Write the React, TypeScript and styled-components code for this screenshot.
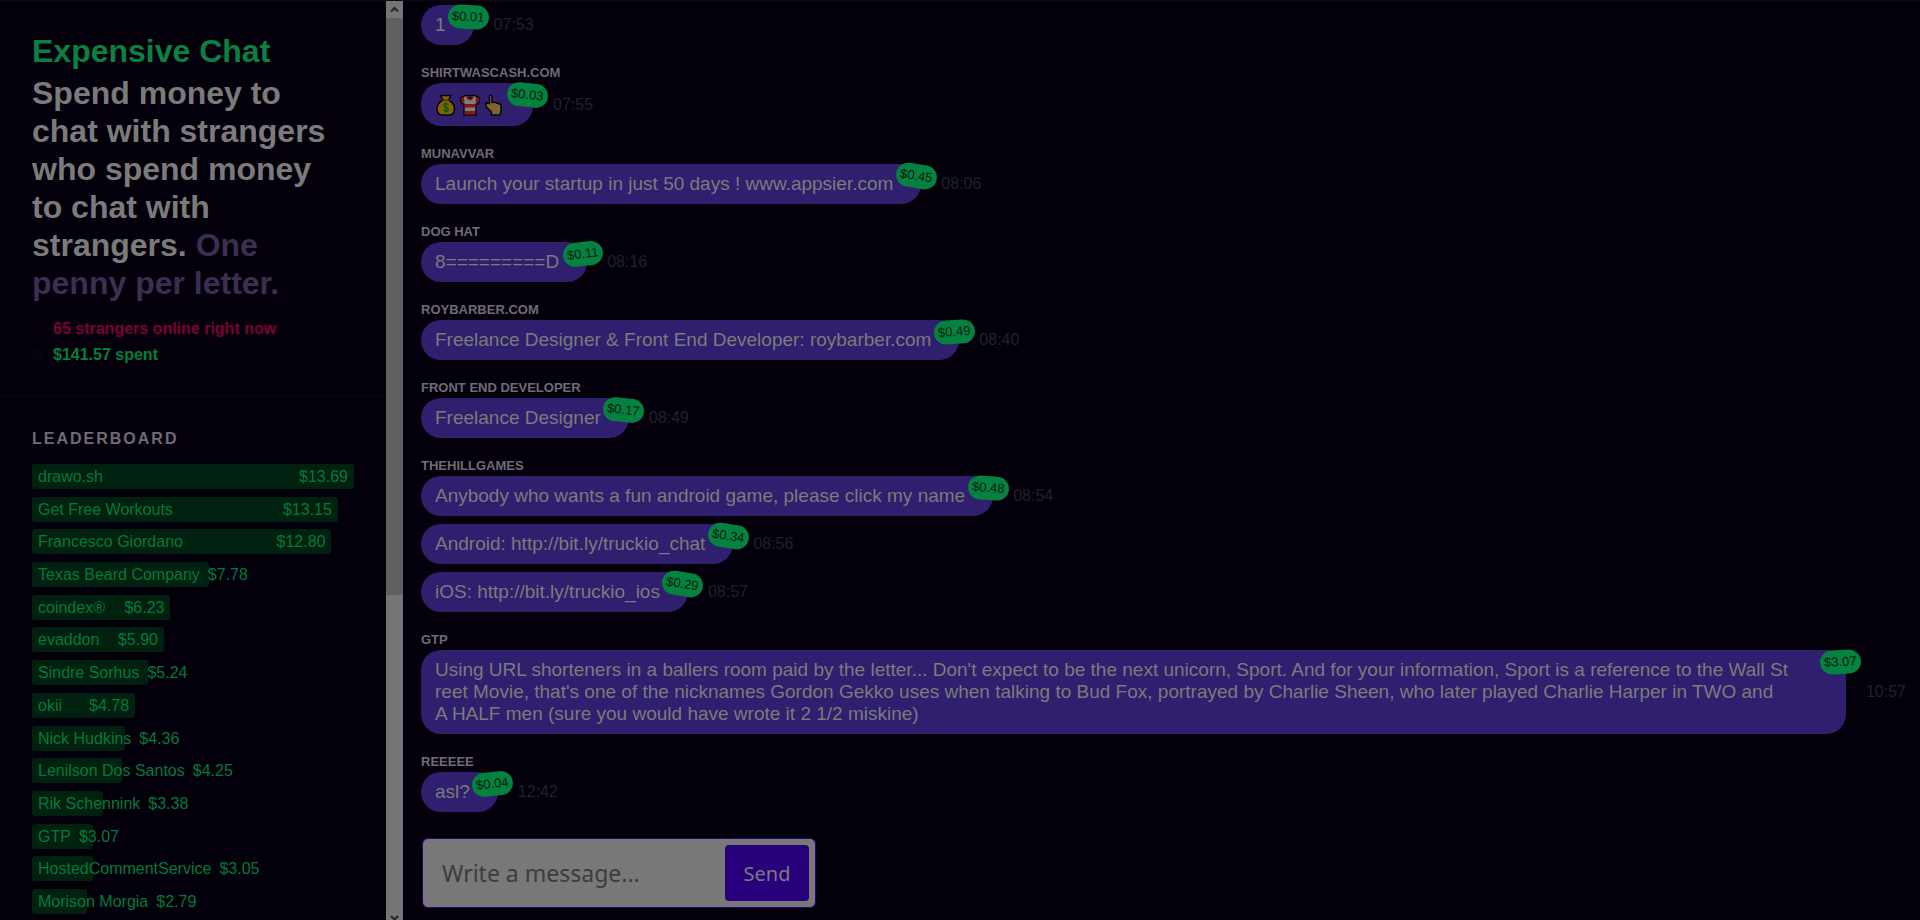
import React from "react";
import styled, { createGlobalStyle } from "styled-components";

const GlobalStyle = createGlobalStyle`
  *, *::before, *::after { box-sizing: border-box; }
  body {
    margin: 0;
    background: #03000b;
    color: #7b7b7b;
    font-family: "Liberation Sans", Arial, sans-serif;
  }
  h1, h2, p, ul, ol { margin: 0; padding: 0; }
  ul, ol { list-style: none; }
`;

const Page = styled.div`
  display: flex;
  height: 100vh;
  overflow: hidden;
  border-top: 1px solid #0a0811;
`;

const Sidebar = styled.aside`
  flex: 0 0 386px;
  display: flex;
  flex-direction: column;
`;

const Intro = styled.header`
  padding: 28px 32px;
  border-bottom: 1px solid #0b0814;
`;

const Title = styled.h1`
  color: #0b8043;
  font-size: 32px;
  line-height: 44px;
`;

const Tagline = styled.p`
  max-width: 310px;
  margin: 1px 0 14px;
  font-size: 32px;
  font-weight: bold;
  line-height: 38px;
`;

const Muted = styled.span`
  color: #3a2f50;
`;

const Stat = styled.li<{ $color: string; $dot: string }>`
  display: flex;
  align-items: center;
  gap: 9px;
  font-size: 16px;
  font-weight: bold;
  line-height: 26px;
  color: ${(p) => p.$color};

  &::before {
    content: "";
    width: 12px;
    height: 12px;
    border-radius: 50%;
    background: ${(p) => p.$dot};
  }
`;

const Leaderboard = styled.section`
  flex: 1;
  display: flex;
  flex-direction: column;
  padding: 32px 32px 6px;
`;

const LeaderboardTitle = styled.h2`
  margin-bottom: 15px;
  font-size: 16px;
  line-height: 20px;
  letter-spacing: 2px;
  color: #6f6c73;
`;

const Ranking = styled.ol`
  flex: 1;
  display: flex;
  flex-direction: column;
  justify-content: space-between;
`;

const Rank = styled.li`
  display: grid;
  height: 25px;
  font-size: 16px;
  line-height: 25px;
  white-space: nowrap;
  color: #007a3b;
`;

const Bar = styled.div`
  grid-area: 1 / 1;
  border-radius: 3px;
  background: #00210f;
`;

const RankText = styled.div`
  grid-area: 1 / 1;
  justify-self: start;
  display: flex;
  justify-content: space-between;
  gap: 8px;
  padding: 0 6px;
`;

const ScrollTrack = styled.div`
  flex: 0 0 17px;
  display: flex;
  flex-direction: column;
  margin-bottom: -6px;
  background: #757575;
`;

const ScrollArrow = styled.button`
  flex: 0 0 17px;
  display: grid;
  place-items: center;
  padding: 0;
  border: 0;
  background: #757575;
`;

const ScrollThumb = styled.div`
  flex: 11;
  background: #606060;
`;

const ScrollRest = styled.div`
  flex: 6;
`;

const Chat = styled.main`
  flex: 1;
  min-width: 0;
  display: flex;
  flex-direction: column;
  justify-content: flex-end;
  padding: 0 14px 12px 18px;
`;

const Author = styled.h2`
  padding: 12px 0 2px;
  font-size: 13px;
  line-height: 16px;
  text-transform: uppercase;
  color: #6f6c73;
`;

const Message = styled.div`
  display: flex;
  align-items: center;
  gap: 20px;
  margin-bottom: 8px;
`;

const Bubble = styled.div<{ $wide?: boolean }>`
  position: relative;
  flex: ${(p) => (p.$wide ? "1" : "0 1 auto")};
  padding: 9px 28px 9px 14px;
  border-radius: 20px;
  background: #2f1f6e;
  font-size: 19px;
  line-height: 22px;
  word-break: break-all;
`;

const Price = styled.span<{ $tilt: number }>`
  position: absolute;
  top: 0;
  right: -15px;
  padding: 0 4px;
  border-radius: 12px;
  background: #05823f;
  color: #03200f;
  font-size: 13px;
  line-height: 24px;
  transform: rotate(${(p) => p.$tilt}deg);
`;

const Time = styled.time`
  font-size: 16px;
  line-height: 20px;
  color: #222027;
`;

const EmojiLine = styled.span`
  display: flex;
  gap: 2px;
  padding: 2px 0 1px;
`;

const Composer = styled.form`
  display: flex;
  align-self: flex-start;
  width: 394px;
  margin: 18px 0 0 1px;
  padding: 6px;
  border: 1px solid #28007c;
  border-radius: 6px;
  background: #787878;
`;

const MessageInput = styled.input`
  flex: 1;
  min-width: 0;
  padding: 0 13px;
  border: 0;
  outline: 0;
  background: transparent;
  color: #333;
  font-family: "Noto Sans", sans-serif;
  font-size: 23px;

  &::placeholder { color: #3c3c3c; opacity: 1; }
`;

const SendButton = styled.button`
  width: 84px;
  height: 56px;
  border: 0;
  border-radius: 4px;
  background: #28007c;
  color: #7b7b7b;
  font-family: "Noto Sans", sans-serif;
  font-size: 20px;
`;

const MoneyBag = () => (
  <svg width="22" height="22" viewBox="0 0 22 22" role="img" aria-label="Money bag">
    <path d="M5.500 1.500h10.500l-2.500 4.500q6 3.500 6 8.500q0 6.500-5.500 6.500h-6.500q-5.500 0-5.500-6.500q0-5 6-8.500z" fill="#836300" stroke="#08040c" strokeWidth="1.500" />
    <path d="M7.500 6h7" stroke="#4d3500" strokeWidth="1.500" />
    <path d="M13.500 11q-.8-1.300-2.500-1.300q-2.300 0-2.300 1.700q0 1.600 2.300 2t2.300 2q0 1.800-2.300 1.800q-1.800 0-2.600-1.500M11 8v11" fill="none" stroke="#12551a" strokeWidth="1.400" />
  </svg>
);

const Shirt = () => (
  <svg width="22" height="22" viewBox="0 0 22 22" role="img" aria-label="Shirt">
    <path d="M6 1.500h10l4.500 2.500l-1 5.500l-2.500.5v11h-12v-11l-2.500-.5l-1-5.500z" fill="#7e7e7e" stroke="#08040c" strokeWidth="1.500" />
    <path d="M2 4.500l3-1.500l.5 5.500l-2.500.5zM20 4.500l-3-1.500l-.5 5.500l2.500.5zM5.800 10h10.400v3.500h-10.400zM5.800 17h10.400v3.300h-10.400z" fill="#84180f" />
    <path d="M7.500 2.500q3.500 6 7 0" fill="#08040c" stroke="#84180f" strokeWidth="1.500" />
  </svg>
);

const PointUp = () => (
  <svg width="22" height="22" viewBox="0 0 22 22" role="img" aria-label="Finger pointing up">
    <path d="M6.500 1.500q2-.8 2.500.7v6l3.500.3l5.500 2v7l-1 3.500h-8.500v-3l-5.500-5.500v-4l3.500 1z" fill="#80642a" stroke="#08040c" strokeWidth="1.500" />
  </svg>
);

interface ChatMessage {
  body: React.ReactNode;
  price: string;
  tilt: number;
  time: string;
  wide?: boolean;
}

const groups: { author?: string; messages: ChatMessage[] }[] = [
  { messages: [{ body: "1", price: "$0.01", tilt: 3, time: "07:53" }] },
  {
    author: "shirtwascash.com",
    messages: [
      {
        body: (
          <EmojiLine>
            <MoneyBag />
            <Shirt />
            <PointUp />
          </EmojiLine>
        ),
        price: "$0.03",
        tilt: 6,
        time: "07:55",
      },
    ],
  },
  {
    author: "Munavvar",
    messages: [
      { body: "Launch your startup in just 50 days ! www.appsier.com", price: "$0.45", tilt: 9, time: "08:06" },
    ],
  },
  { author: "Dog Hat", messages: [{ body: "8=========D", price: "$0.11", tilt: -7, time: "08:16" }] },
  {
    author: "roybarber.com",
    messages: [
      { body: "Freelance Designer & Front End Developer: roybarber.com", price: "$0.49", tilt: -4, time: "08:40" },
    ],
  },
  { author: "Front End Developer", messages: [{ body: "Freelance Designer", price: "$0.17", tilt: 6, time: "08:49" }] },
  {
    author: "TheHillGames",
    messages: [
      { body: "Anybody who wants a fun android game, please click my name", price: "$0.48", tilt: 4, time: "08:54" },
      { body: "Android: http://bit.ly/truckio_chat", price: "$0.34", tilt: 9, time: "08:56" },
      { body: "iOS: http://bit.ly/truckio_ios", price: "$0.29", tilt: 9, time: "08:57" },
    ],
  },
  {
    author: "GTP",
    messages: [
      {
        body: (
          <>
            Using URL shorteners in a ballers room paid by the letter... Don't expect to be the next unicorn, Sport. And
            for your information, Sport is a reference to the Wall St
            <br />
            reet Movie, that's one of the nicknames Gordon Gekko uses when talking to Bud Fox, portrayed by Charlie
            Sheen, who later played Charlie Harper in TWO and
            <br />A HALF men (sure you would have wrote it 2 1/2 miskine)
          </>
        ),
        price: "$3.07",
        tilt: -3,
        time: "10:57",
        wide: true,
      },
    ],
  },
  { author: "Reeeee", messages: [{ body: "asl?", price: "$0.04", tilt: -6, time: "12:42" }] },
];

const ranking: [name: string, amount: string, share: number][] = [
  ["drawo.sh", "$13.69", 100],
  ["Get Free Workouts", "$13.15", 95],
  ["Francesco Giordano", "$12.80", 93],
  ["Texas Beard Company", "$7.78", 55],
  ["coindex®", "$6.23", 43],
  ["evaddon", "$5.90", 41],
  ["Sindre Sorhus", "$5.24", 36],
  ["okii", "$4.78", 32],
  ["Nick Hudkins", "$4.36", 29],
  ["Lenilson Dos Santos", "$4.25", 28],
  ["Rik Schennink", "$3.38", 22],
  ["GTP", "$3.07", 19],
  ["HostedCommentService", "$3.05", 19],
  ["Morison Morgia", "$2.79", 17],
];

const Chevron = ({ d }: { d: string }) => (
  <svg width="9" height="9" viewBox="0 0 9 9" fill="none" stroke="#262626" strokeWidth="2" aria-hidden="true">
    <path d={d} />
  </svg>
);

export default function App() {
  return (
    <>
      <GlobalStyle />
      <Page>
        <Sidebar>
          <Intro>
            <Title>Expensive Chat</Title>
            <Tagline>
              Spend money to chat with strangers who spend money to chat with strangers.{" "}
              <Muted>One penny per letter.</Muted>
            </Tagline>
            <ul>
              <Stat $color="#7d0033" $dot="#06000c">65 strangers online right now</Stat>
              <Stat $color="#00803c" $dot="#03040e">$141.57 spent</Stat>
            </ul>
          </Intro>
          <Leaderboard>
            <LeaderboardTitle>LEADERBOARD</LeaderboardTitle>
            <Ranking>
              {ranking.map(([name, amount, share]) => (
                <Rank key={name}>
                  <Bar style={{ width: `${share}%` }} />
                  <RankText style={{ minWidth: `${share}%` }}>
                    <span>{name}</span>
                    <span>{amount}</span>
                  </RankText>
                </Rank>
              ))}
            </Ranking>
          </Leaderboard>
        </Sidebar>
        <ScrollTrack>
          <ScrollArrow type="button" aria-label="Scroll up">
            <Chevron d="M1 6.500l3.500-3.500l3.500 3.500" />
          </ScrollArrow>
          <ScrollThumb />
          <ScrollRest />
          <ScrollArrow type="button" aria-label="Scroll down">
            <Chevron d="M1 3l3.500 3.500l3.500-3.500" />
          </ScrollArrow>
        </ScrollTrack>
        <Chat>
          {groups.map((group, index) => (
            <section key={index}>
              {group.author && <Author>{group.author}</Author>}
              {group.messages.map((message) => (
                <Message key={message.time}>
                  <Bubble $wide={message.wide}>
                    {message.body}
                    <Price $tilt={message.tilt}>{message.price}</Price>
                  </Bubble>
                  <Time>{message.time}</Time>
                </Message>
              ))}
            </section>
          ))}
          <Composer onSubmit={(event) => event.preventDefault()}>
            <MessageInput type="text" aria-label="Message" placeholder="Write a message..." />
            <SendButton type="submit">Send</SendButton>
          </Composer>
        </Chat>
      </Page>
    </>
  );
}
